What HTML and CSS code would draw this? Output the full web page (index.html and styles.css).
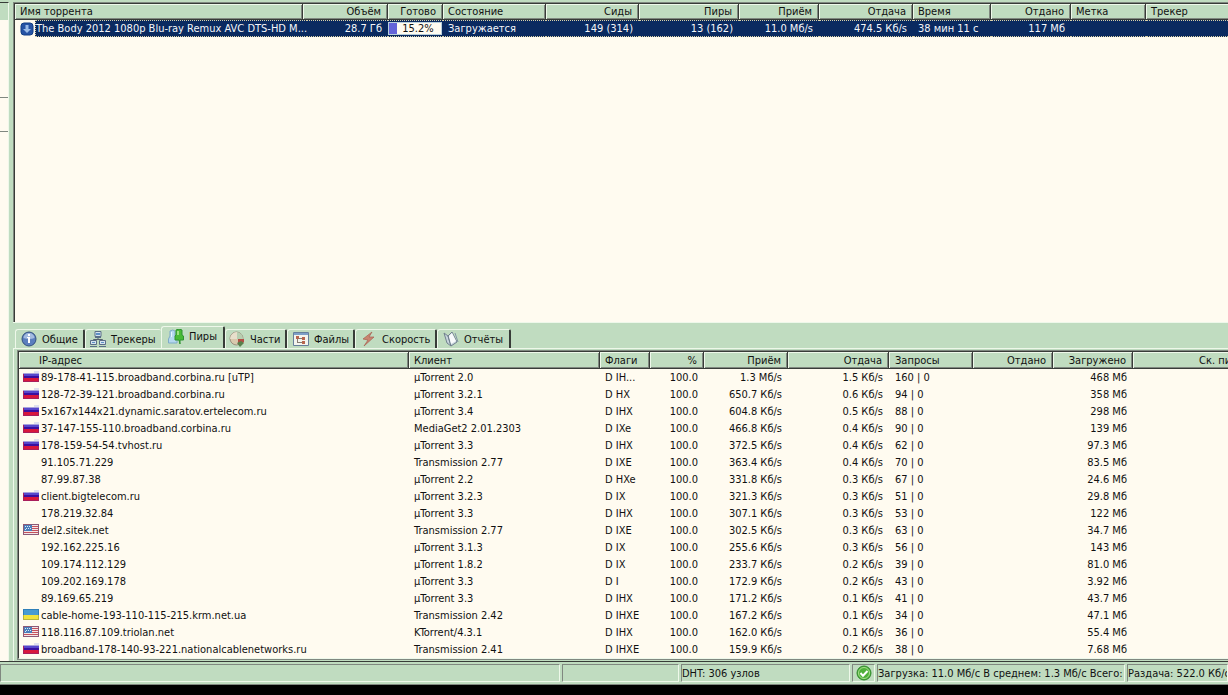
FILE: index.html
```
<!DOCTYPE html>
<html lang="ru">
<head>
<meta charset="utf-8">
<title>Торренты</title>
<link rel="stylesheet" href="styles.css">
</head>
<body>
<svg class="defs" aria-hidden="true">
  <symbol id="ru" viewBox="0 0 16 12"><path fill="#dfe0ee" d="M11 0h5v2h-5z"/><path fill="#a9a2dc" d="M0 2h16v1H0z"/><path fill="#5648cc" d="M0 3h16v2H0z"/><path fill="#3a0fa0" d="M0 5h16v2H0z"/><path fill="#d8173c" d="M0 7h16v4H0z"/><path fill="#a81f5c" d="M0 3h1v8H0zM0 10h16v1H0zM15 7h1v4h-1z"/></symbol>
  <symbol id="us" viewBox="0 0 16 12"><path fill="#f4e6e6" d="M0 0h16v11H0z"/><path fill="#c4515c" d="M0 0h16v1H0zM0 2h16v1H0zM0 4h16v1H0zM0 6h16v1H0zM0 8h16v1H0zM0 10h16v1H0z"/><path fill="#4a7dba" d="M1 1h8v6H1z"/><path fill="#d8e8f8" d="M2 2h1v1H2zM4 2h1v1H4zM6 2h1v1H6zM3 4h1v1H3zM5 4h1v1H5zM7 4h1v1H7zM2 5h1v1H2z"/><path fill="none" stroke="#8a5a78" d="M.5.5h15v10H.5z"/></symbol>
  <symbol id="ua" viewBox="0 0 16 12"><path fill="#489bd2" d="M0 0h16v6H0z"/><path fill="#f2e33c" d="M0 6h16v5H0z"/><path fill="#2f7fb8" d="M0 0h16v1H0zM0 0h1v6H0zM15 0h1v6h-1z"/><path fill="#b9b53c" d="M0 10h16v1H0zM0 6h1v5H0zM15 6h1v5h-1z"/></symbol>
</svg>
<main class="workspace">
  <aside class="sidebar"><div class="side-head"></div><div class="side-list"></div><div class="side-gap"></div><div class="side-rest"></div></aside>
  <div class="content">
    <section class="torrents">
      <table class="grid">
        <colgroup><col class="w288"><col class="w85"><col class="w55"><col class="w103"><col class="w93"><col class="w100"><col class="w80"><col class="w94"><col class="w78"><col class="w80"><col class="w75"><col></colgroup>
        <thead><tr><th>Имя торрента</th><th class="r">Объём</th><th class="r">Готово</th><th>Состояние</th><th class="r">Сиды</th><th class="r">Пиры</th><th class="r">Приём</th><th class="r">Отдача</th><th>Время</th><th class="r">Отдано</th><th>Метка</th><th>Трекер</th></tr></thead>
        <tbody><tr class="selected">
          <td class="name"><div class="name-cell"><svg class="dl" viewBox="0 0 14 14"><rect x="1" y="1" width="12" height="12" rx="3" fill="#2653a4" stroke="#123f86"/><path fill="#9bbce8" d="M5.5 3h3v4H11l-4 4-4-4h2.5z"/></svg><span class="title">The Body 2012 1080p Blu-ray Remux AVC DTS-HD M...</span></div></td>
          <td class="r">28.7 Гб</td><td class="bar-cell"><div class="bar"><span class="fill" style="width:15.2%"></span><span class="pct">15.2%</span></div></td><td>Загружается</td><td class="r">149 (314)</td><td class="r">13 (162)</td><td class="r">11.0 Мб/s</td><td class="r">474.5 Кб/s</td><td>38 мин 11 с</td><td class="r">117 Мб</td><td></td><td></td>
        </tr></tbody>
      </table>
    </section>
    <nav class="tabs">
      <button class="tab t1"><svg viewBox="0 0 16 16"><circle cx="8" cy="8" r="7" fill="#5b7fbe" stroke="#33517f"/><path d="M2.5 7a5.5 5 0 0 1 11 0q-5 2-11 0" fill="#a4bce0"/><path d="M7 3h2v2H7zM6 6h3v6H7V7H6z" fill="#fff"/></svg>Общие</button>
      <button class="tab t2"><svg viewBox="0 0 16 16"><path d="M8 6v3M3.500 10V8.500h9V10" fill="none" stroke="#55616d"/><path fill="#d5e3ef" stroke="#5a6f88" d="M5 .5h6v5H5zM.5 9.500h6v4h-6zM9.500 9.500h6v4h-6z"/><path fill="#5e91c5" d="M6 2h4v2H6zM2 11h3v1H2zM11 11h3v1h-3z"/><path stroke="#5a6f88" d="M5 6.500h6M0 15.500h7M9 15.500h7"/></svg>Трекеры</button>
      <button class="tab active t3"><svg viewBox="0 0 16 16"><path d="M2 2q3-2 5 0v5l2 3v4H.500v-4L2 7z" fill="#b4d8ee" stroke="#7fabc8"/><path d="M3 3h1v5H3z" fill="#e6f5fc"/><path d="M8 1q3-2 6 0v5l1.500 1v4H12v4l-1-4H7V7l1-1z" fill="#48bb35" stroke="#2f9430"/><path d="M9 2h2v4H9z" fill="#9ce282"/></svg>Пиры</button>
      <button class="tab t4"><svg viewBox="0 0 16 16"><circle cx="7.500" cy="7.500" r="6.500" fill="#d9c9ad" stroke="#9c917f"/><path d="M8 8V1a7 7 0 0 1 6 7z" fill="#b7ceb0"/><path d="M1 8h7V1a7 7 0 0 0-7 7" fill="#e8dfcb"/><path d="M9 8h6v3l-4 4-2-3z" fill="#b54e45"/><path d="M8 12l3 4 4-4-3-2z" fill="#59814c"/></svg>Части</button>
      <button class="tab t5"><svg viewBox="0 0 16 16"><path fill="#f4f4ee" stroke="#667f9b" d="M.500 1.500h15v13H.500z"/><path fill="#7da0c8" d="M1 2h14v2H1z"/><path stroke="#867c72" fill="none" d="M4.500 5v7M4 7.500h5M4 11.500h5"/><path fill="#b7654e" d="M3 5h3v3H3zM9 6h3v3H9zM9 10h3v3H9z"/></svg>Файлы</button>
      <button class="tab t6"><svg viewBox="0 0 16 16"><path fill="#c98470" stroke="#a76050" stroke-width=".7" d="M11 1 2 8l5 1-4 6L13 6H8z"/></svg>Скорость</button>
      <button class="tab t7"><svg viewBox="0 0 16 16"><path fill="#c9d6de" stroke="#71818e" d="m1 2 4 3 3 10-4-3zM5 5l4-4 5 10-6 4z"/><path fill="#f8fafb" d="m6 5 3-3 4 8-5 3z"/><path stroke="#8296a6" d="m12 2 3 9"/></svg>Отчёты</button>
    </nav>
    <section class="peers">
      <table class="grid">
        <colgroup><col class="w390"><col class="w191"><col class="w50"><col class="w54"><col class="w84"><col class="w101"><col class="w84"><col class="w80"><col class="w80"><col></colgroup>
        <thead><tr><th class="ip">IP-адрес</th><th>Клиент</th><th>Флаги</th><th class="r">%</th><th class="r">Приём</th><th class="r">Отдача</th><th>Запросы</th><th class="r">Отдано</th><th class="r">Загружено</th><th class="last">Ск. пиров</th></tr></thead>
        <tbody>
<tr><td><svg class="flag"><use href="#ru"/></svg>89-178-41-115.broadband.corbina.ru [uTP]</td><td>µTorrent 2.0</td><td>D IH...</td><td class="r">100.0</td><td class="r">1.3 Мб/s</td><td class="r">1.5 Кб/s</td><td>160 | 0</td><td></td><td class="r">468 Мб</td><td></td></tr>
<tr><td><svg class="flag"><use href="#ru"/></svg>128-72-39-121.broadband.corbina.ru</td><td>µTorrent 3.2.1</td><td>D HX</td><td class="r">100.0</td><td class="r">650.7 Кб/s</td><td class="r">0.6 Кб/s</td><td>94 | 0</td><td></td><td class="r">358 Мб</td><td></td></tr>
<tr><td><svg class="flag"><use href="#ru"/></svg>5x167x144x21.dynamic.saratov.ertelecom.ru</td><td>µTorrent 3.4</td><td>D IHX</td><td class="r">100.0</td><td class="r">604.8 Кб/s</td><td class="r">0.5 Кб/s</td><td>88 | 0</td><td></td><td class="r">298 Мб</td><td></td></tr>
<tr><td><svg class="flag"><use href="#ru"/></svg>37-147-155-110.broadband.corbina.ru</td><td>MediaGet2 2.01.2303</td><td>D IXe</td><td class="r">100.0</td><td class="r">466.8 Кб/s</td><td class="r">0.4 Кб/s</td><td>90 | 0</td><td></td><td class="r">139 Мб</td><td></td></tr>
<tr><td><svg class="flag"><use href="#ru"/></svg>178-159-54-54.tvhost.ru</td><td>µTorrent 3.3</td><td>D IHX</td><td class="r">100.0</td><td class="r">372.5 Кб/s</td><td class="r">0.4 Кб/s</td><td>62 | 0</td><td></td><td class="r">97.3 Мб</td><td></td></tr>
<tr><td><svg class="flag"></svg>91.105.71.229</td><td>Transmission 2.77</td><td>D IXE</td><td class="r">100.0</td><td class="r">363.4 Кб/s</td><td class="r">0.4 Кб/s</td><td>70 | 0</td><td></td><td class="r">83.5 Мб</td><td></td></tr>
<tr><td><svg class="flag"></svg>87.99.87.38</td><td>µTorrent 2.2</td><td>D HXe</td><td class="r">100.0</td><td class="r">331.8 Кб/s</td><td class="r">0.3 Кб/s</td><td>67 | 0</td><td></td><td class="r">24.6 Мб</td><td></td></tr>
<tr><td><svg class="flag"><use href="#ru"/></svg>client.bigtelecom.ru</td><td>µTorrent 3.2.3</td><td>D IX</td><td class="r">100.0</td><td class="r">321.3 Кб/s</td><td class="r">0.3 Кб/s</td><td>51 | 0</td><td></td><td class="r">29.8 Мб</td><td></td></tr>
<tr><td><svg class="flag"></svg>178.219.32.84</td><td>µTorrent 3.3</td><td>D IHX</td><td class="r">100.0</td><td class="r">307.1 Кб/s</td><td class="r">0.3 Кб/s</td><td>53 | 0</td><td></td><td class="r">122 Мб</td><td></td></tr>
<tr><td><svg class="flag"><use href="#us"/></svg>del2.sitek.net</td><td>Transmission 2.77</td><td>D IXE</td><td class="r">100.0</td><td class="r">302.5 Кб/s</td><td class="r">0.3 Кб/s</td><td>63 | 0</td><td></td><td class="r">34.7 Мб</td><td></td></tr>
<tr><td><svg class="flag"></svg>192.162.225.16</td><td>µTorrent 3.1.3</td><td>D IX</td><td class="r">100.0</td><td class="r">255.6 Кб/s</td><td class="r">0.3 Кб/s</td><td>56 | 0</td><td></td><td class="r">143 Мб</td><td></td></tr>
<tr><td><svg class="flag"></svg>109.174.112.129</td><td>µTorrent 1.8.2</td><td>D IX</td><td class="r">100.0</td><td class="r">233.7 Кб/s</td><td class="r">0.2 Кб/s</td><td>39 | 0</td><td></td><td class="r">81.0 Мб</td><td></td></tr>
<tr><td><svg class="flag"></svg>109.202.169.178</td><td>µTorrent 3.3</td><td>D I</td><td class="r">100.0</td><td class="r">172.9 Кб/s</td><td class="r">0.2 Кб/s</td><td>43 | 0</td><td></td><td class="r">3.92 Мб</td><td></td></tr>
<tr><td><svg class="flag"></svg>89.169.65.219</td><td>µTorrent 3.3</td><td>D IHX</td><td class="r">100.0</td><td class="r">171.2 Кб/s</td><td class="r">0.1 Кб/s</td><td>41 | 0</td><td></td><td class="r">43.7 Мб</td><td></td></tr>
<tr><td><svg class="flag"><use href="#ua"/></svg>cable-home-193-110-115-215.krm.net.ua</td><td>Transmission 2.42</td><td>D IHXE</td><td class="r">100.0</td><td class="r">167.2 Кб/s</td><td class="r">0.1 Кб/s</td><td>34 | 0</td><td></td><td class="r">47.1 Мб</td><td></td></tr>
<tr><td><svg class="flag"><use href="#us"/></svg>118.116.87.109.triolan.net</td><td>KTorrent/4.3.1</td><td>D IHX</td><td class="r">100.0</td><td class="r">162.0 Кб/s</td><td class="r">0.1 Кб/s</td><td>36 | 0</td><td></td><td class="r">55.4 Мб</td><td></td></tr>
<tr><td><svg class="flag"><use href="#ru"/></svg>broadband-178-140-93-221.nationalcablenetworks.ru</td><td>Transmission 2.41</td><td>D IHXE</td><td class="r">100.0</td><td class="r">159.9 Кб/s</td><td class="r">0.2 Кб/s</td><td>38 | 0</td><td></td><td class="r">7.68 Мб</td><td></td></tr>
        </tbody>
      </table>
    </section>
  </div>
</main>
<footer class="status">
  <div class="cell"></div><div class="cell"></div><div class="cell">DHT: 306 узлов</div>
  <div class="cell ok"><svg viewBox="0 0 16 16"><circle cx="8" cy="8" r="7" fill="#4fb03a" stroke="#2f8a2b"/><circle cx="8" cy="8" r="5.500" fill="none" stroke="#a5dd8c"/><path d="m4.500 8 2.500 2.800L11.500 6" fill="none" stroke="#fff" stroke-width="2"/></svg></div>
  <div class="cell">Загрузка: 11.0 Мб/с В среднем: 1.3 Мб/с Всего: 4</div><div class="cell">Раздача: 522.0 Кб/с</div>
</footer>
</body>
</html>
```
FILE: styles.css
```
* { box-sizing: border-box; }
:root { --green: #c0dcc0; --cream: #fffbf0; --light: #eef8ea; --gray: #808880; --dark: #383c38; --navy: #0a2a60; }
body { margin: 0; min-height: 100vh; display: flex; flex-direction: column; background: var(--green); color: #111; font: 11px/17px "DejaVu Sans Condensed", "DejaVu Sans", sans-serif; border-bottom: 10px solid #000; overflow-x: hidden; }
.defs { display: none; }
.workspace { flex: 1; display: flex; gap: 4px; padding-top: 2px; }
.sidebar { width: 9px; display: flex; flex-direction: column; border-top: 1px solid var(--dark); border-right: 1px solid var(--light); background: var(--cream); }
.side-head { height: 17px; background: var(--green); }
.side-list { height: 77px; }
.side-gap { height: 35px; border: solid var(--gray); border-width: 1px 0; }
.side-rest { flex: 1; }
.content { flex: 1; min-width: 0; display: flex; flex-direction: column; }
.torrents { flex: 1; background: var(--cream); border: solid var(--gray); border-width: 1px 0 0 1px; box-shadow: inset 1px 1px var(--dark); padding: 1px 0 0 1px; }
.grid { width: 100%; table-layout: fixed; border-collapse: separate; border-spacing: 0; }
.grid th { height: 16px; padding: 1px 6px 0 5px; background: var(--green); font-weight: normal; text-align: left; line-height: 14px; white-space: nowrap; overflow: hidden; border: solid var(--dark); border-width: 0 1px 1px 0; box-shadow: inset 1px 1px var(--light), inset -1px -1px var(--gray); }
.grid td { height: 17px; padding: 0 6px 0 5px; white-space: nowrap; overflow: hidden; line-height: 17px; }
.grid .r { text-align: right; }
.grid th:last-child { border-right: 0; box-shadow: inset 1px 1px var(--light), inset 0 -1px var(--gray); }
.w50 { width: 50px; } .w54 { width: 54px; } .w55 { width: 55px; } .w75 { width: 75px; } .w78 { width: 78px; } .w80 { width: 80px; }
.w84 { width: 84px; } .w85 { width: 85px; } .w93 { width: 93px; } .w94 { width: 94px; } .w100 { width: 100px; } .w101 { width: 101px; } .w103 { width: 103px; }
.w191 { width: 191px; } .w288 { width: 288px; } .w390 { width: 390px; }
.selected td { background: var(--navy); color: #f4f6fa; line-height: 15px; border: dotted #d8d0a8; border-width: 1px 0; }
.selected td.name { padding: 0; background: var(--cream); border: 0; overflow: visible; position: relative; z-index: 1; }
.name-cell { display: flex; align-items: center; padding-left: 5px; }
.dl { width: 14px; height: 14px; flex: none; }
.name-cell .title { flex: 1; margin-left: 1px; background: var(--navy); border: dotted #d8d0a8; border-width: 1px 0 1px 1px; }
.selected td.bar-cell { padding: 0 1px 0 0; }
.bar { display: flex; height: 13px; background: var(--cream); border: 1px solid #b8d0dc; color: #111; position: relative; }
.fill { background: #6464d8; }
.pct { position: absolute; inset: 0 0 0 6px; text-align: center; line-height: 11px; }
.tabs { display: flex; align-items: flex-end; height: 26px; padding-left: 2px; border-top: 1px solid var(--light); }
.tab { display: flex; align-items: center; height: 19px; margin: 0; padding: 0 0 0 6px; gap: 5px; font: inherit; color: inherit; background: var(--green); border: solid var(--light); border-width: 1px 0 0 1px; border-right: 2px solid var(--dark); border-radius: 3px 2px 0 0; text-align: left; white-space: nowrap; }
.tab svg { width: 16px; height: 16px; flex: none; }
.tab.active { height: 22px; padding-bottom: 2px; }
.t1 { width: 70px; padding-left: 5px; } .t2 { width: 76px; padding-left: 4px; border-right: 0; } .t3 { width: 64px; } .t4 { width: 62px; padding-left: 3px; } .t5 { width: 68px; padding-left: 5px; } .t6 { width: 82px; padding-left: 5px; } .t7 { width: 74px; padding-left: 5px; }
.peers { border: solid var(--light); border-width: 1px 0 0 1px; padding: 1px 0 2px 4px; box-shadow: 0 1px var(--gray); }
.peers .grid { background: var(--cream); border: 1px solid var(--dark); border-width: 1px 0 0 1px; outline: 1px solid var(--gray); margin-top: 1px; border-bottom: 1px solid var(--light); }
.peers .grid th { height: 17px; line-height: 15px; }
.peers td:first-child { padding-left: 4px; }
.peers .grid th.ip { padding-left: 20px; }
.peers .grid th.last { padding-left: 66px; padding-right: 0; }
.peers .grid th:nth-child(7), .peers td:nth-child(7) { padding-left: 6px; }
.flag { width: 16px; height: 12px; margin-right: 2px; vertical-align: -2px; }
.status { display: grid; grid-template-columns: 560px 117px 169px 23px 248px 1fr; gap: 2px; padding: 2px 0; border-top: 1px solid var(--dark); border-bottom: 1px solid var(--gray); }
.status .cell { height: 18px; min-width: 0; overflow: hidden; line-height: 17px; white-space: nowrap; border: 1px solid var(--gray); border-right-color: var(--light); border-bottom-color: var(--light); }
.status .ok { display: flex; align-items: center; justify-content: center; }
.ok svg { width: 16px; height: 16px; }
```
